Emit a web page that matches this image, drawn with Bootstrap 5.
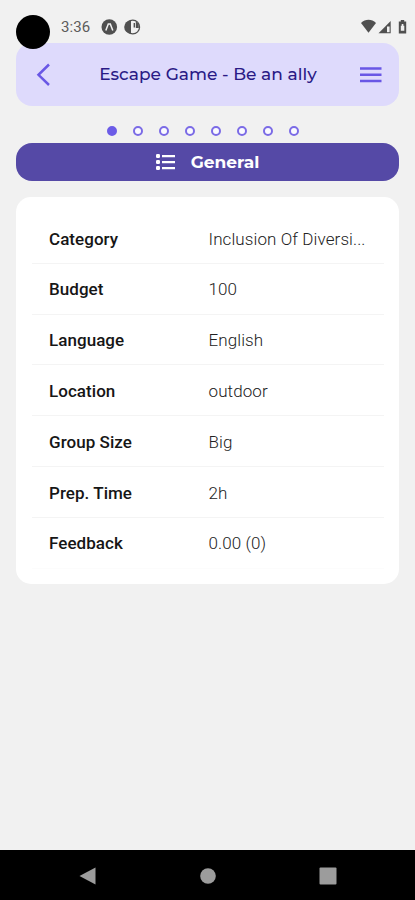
<!DOCTYPE html>
<html lang="en">
<head>
<meta charset="utf-8">
<meta name="viewport" content="width=device-width, initial-scale=1">
<title>Escape Game - Be an ally</title>
<link href="https://cdn.jsdelivr.net/npm/bootstrap@5.3.0/dist/css/bootstrap.min.css" rel="stylesheet">
<style>
  body { background: #f1f1f1; font-family: Roboto, "Liberation Sans", sans-serif; height: 900px; overflow: hidden; }
  svg { display: block; flex: none; }
  .status-bar { height: 43px; padding: 11px 8px 0 16px; color: #505050; }
  .camera { width: 34px; height: 34px; background: #000; left: 16px; top: 15px; z-index: 2; }
  .clock { font-size: 15px; line-height: 32px; margin-left: 45px; width: 40px; letter-spacing: .1px; color: #5c5c5c; }
  .app-header { height: 63px; margin: 0 16px; padding: 0 17px 0 20px; border-radius: 16px; background: #dedafc; }
  .app-header h1 { font: 500 17px/24px Montserrat, Inter, sans-serif; color: #2a1a86; padding: 0 0 2px 5px; letter-spacing: .03px; }
  .dots { height: 37px; padding: 20px 0 0 107px; gap: 16px; }
  .dot { width: 10px; height: 10px; border: 2px solid #7b6be6; background: #fafaff; }
  .dot.active { background: #6c5ce7; border-color: #6c5ce7; }
  .section-tab { height: 38px; margin: 0 16px; border: 0; border-radius: 16px; background: #5549a6; font: 700 17px/24px Montserrat, Inter, sans-serif; gap: 16px; }
  .info { margin: 16px 16px 0; padding: 16px 15px 15px 16px; border: 0; border-radius: 15px; height: 387px; }
  .info-row { height: 50.8px; border-bottom: 1px solid #f4f4f4; padding: 3px 17px 0; font-size: 17px; }
  .info-row:last-child { border-color: #fcfcfc; }
  .info-row dt { width: 159.5px; font-weight: 500; color: #161616; letter-spacing: .05px; }
  .info-row dd { width: 158px; font-weight: 300; color: #222; letter-spacing: .1px; white-space: nowrap; }
  .system-nav { height: 50px; background: #000; padding: 1px 78px 0 79px; }
</style>
</head>
<body class="d-flex flex-column position-relative">
  <span class="camera position-absolute rounded-circle"></span>
  <div class="status-bar d-flex align-items-start">
    <span class="clock">3:36</span>
    <svg width="40" height="32" viewBox="101 11 40 32">
      <circle cx="109.3" cy="27" r="7.8" fill="#505050"/>
      <path d="M105.8 30.5l2.5-6.5h2l2.5 6.5" fill="none" stroke="#f1f1f1" stroke-width="1.5"/>
      <circle cx="132.8" cy="27" r="6.8" fill="#f1f1f1" stroke="#505050" stroke-width="1.2"/>
      <path d="M131 20.2a6.8 6.8 0 0 0 0 13.6z" fill="#505050"/>
      <path d="M133.6 23h1.4v4.5h-1.4zM135.8 21.2l3 2.8v4h-3z" fill="#505050"/>
    </svg>
    <svg class="ms-auto" width="47" height="32" viewBox="360 11 47 32" fill="#505050">
      <path d="M361 23c4.3-4.2 10.7-4.2 15 0l-7.5 9.7z"/>
      <path d="M378.5 33.3l12.2-12.3v12.3z"/>
      <path d="M387 26.5h2.6v5.7H387z" fill="#f1f1f1"/>
      <path d="M400.8 20h3.4v1.5h2V33.5h-7.4v-12h2z"/>
      <path d="M401.7 24h1.7v1.7h.9v5h-3.5v-5h.9z" fill="#f1f1f1"/>
    </svg>
  </div>

  <header class="app-header d-flex align-items-center justify-content-between">
    <svg width="16" height="24" viewBox="0 0 16 24" fill="none" stroke="#6957e5" stroke-width="2.5"><path d="M13 1.5L2.5 11.8 13 22"/></svg>
    <h1 class="mb-0 text-nowrap">Escape Game - Be an ally</h1>
    <svg width="23" height="20" viewBox="0 0 23 20" stroke="#6957e5" stroke-width="2.6"><path d="M1 3.5h21.5M1 9.8h21.5M1 16h21.5"/></svg>
  </header>

  <div class="dots d-flex">
    <span class="dot active rounded-circle"></span><span class="dot rounded-circle"></span><span class="dot rounded-circle"></span><span class="dot rounded-circle"></span><span class="dot rounded-circle"></span><span class="dot rounded-circle"></span><span class="dot rounded-circle"></span><span class="dot rounded-circle"></span>
  </div>

  <button type="button" class="section-tab text-white d-flex align-items-center justify-content-center p-0">
    <svg width="19" height="18" viewBox="0 0 19 18" fill="#fff"><rect y="1" width="4" height="4" rx="1.2"/><rect y="7" width="4" height="4" rx="1.2"/><rect y="13" width="4" height="4" rx="1.2"/><path d="M6 2h13v2.2H6zM6 8h13v2.2H6zM6 14h13v2.2H6z"/></svg>
    <span>General</span>
  </button>

  <dl class="card info mb-0">
    <div class="info-row d-flex align-items-center"><dt>Category</dt><dd class="m-0">Inclusion Of Diversi...</dd></div>
    <div class="info-row d-flex align-items-center"><dt>Budget</dt><dd class="m-0">100</dd></div>
    <div class="info-row d-flex align-items-center"><dt>Language</dt><dd class="m-0">English</dd></div>
    <div class="info-row d-flex align-items-center"><dt>Location</dt><dd class="m-0">outdoor</dd></div>
    <div class="info-row d-flex align-items-center"><dt>Group Size</dt><dd class="m-0">Big</dd></div>
    <div class="info-row d-flex align-items-center"><dt>Prep. Time</dt><dd class="m-0">2h</dd></div>
    <div class="info-row d-flex align-items-center"><dt>Feedback</dt><dd class="m-0">0.00 (0)</dd></div>
  </dl>

  <nav class="system-nav d-flex align-items-center justify-content-between mt-auto">
    <svg width="17" height="18" viewBox="0 0 17 18" fill="#9c9c9c"><path d="M.5 9L16.5.5v17z"/></svg>
    <svg width="16" height="16" viewBox="0 0 16 16" fill="#9c9c9c"><circle cx="8" cy="8" r="7.8"/></svg>
    <svg width="18" height="18" viewBox="0 0 18 18" fill="#9c9c9c"><rect x=".5" y=".5" width="17" height="17" rx="1"/></svg>
  </nav>
<script src="https://cdn.jsdelivr.net/npm/bootstrap@5.3.0/dist/js/bootstrap.bundle.min.js"></script>
</body>
</html>
